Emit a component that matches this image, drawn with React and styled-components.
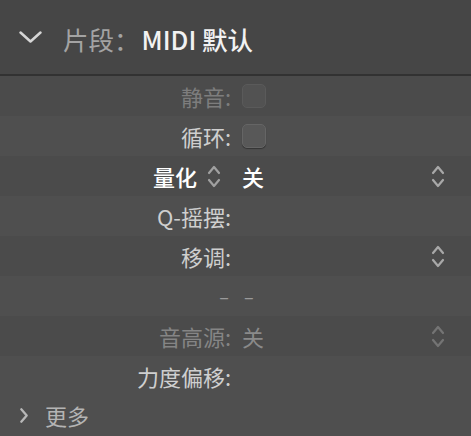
import React from 'react';
import styled, { createGlobalStyle } from 'styled-components';

const GlobalStyle = createGlobalStyle`
  html, body {
    margin: 0;
    padding: 0;
    background: #4c4c4c;
  }
  body {
    font-family: "Noto Sans CJK SC", "Noto Sans", sans-serif;
  }
`;

const Panel = styled.div`
  width: 471px;
  height: 436px;
  display: flex;
  flex-direction: column;
  background: #4c4c4c;
  overflow: hidden;
`;

const Header = styled.div`
  height: 74px;
  flex-shrink: 0;
  display: flex;
  align-items: center;
  gap: 20px;
  padding-left: 18px;
  background: #464646;
  border-bottom: 2px solid #323232;
  font-size: 25.5px;
  line-height: 1;
`;

const HeaderTitle = styled.div`
  display: flex;
  align-items: center;
  margin-top: 4px;
`;

const Dim = styled.span`
  color: #a3a3a3;
`;

const Bright = styled.span`
  color: #f2f2f2;
  font-weight: 500;
  margin-left: 2px;
`;

const Row = styled.div`
  height: 40px;
  flex-shrink: 0;
  display: grid;
  grid-template-columns: 231px 1fr 40px;
  column-gap: 11px;
  align-items: center;
  background: ${p => (p.$alt ? '#4f4f4f' : '#4b4b4b')};
  font-size: 22px;
  line-height: 1;
`;

const Label = styled.div`
  display: flex;
  align-items: center;
  justify-content: flex-end;
  gap: 10px;
  color: ${p => p.$tone};
  font-weight: ${p => (p.$bold ? 500 : 400)};
  white-space: nowrap;
`;

const Value = styled.div`
  display: flex;
  align-items: center;
  color: ${p => p.$tone};
  font-weight: ${p => (p.$bold ? 500 : 400)};
`;

const RightIcon = styled.div`
  display: flex;
  align-items: center;
  justify-content: flex-start;
`;

const InlineIcon = styled.span`
  display: flex;
  margin-right: 10px;
`;

const Checkbox = styled.div`
  width: 22px;
  height: 22px;
  border-radius: 5px;
  background: ${p => (p.$dim ? '#525252' : '#585858')};
  border: 1px solid ${p => (p.$dim ? '#5a5a5a' : '#656565')};
  box-shadow: ${p => (p.$dim ? 'none' : '0 1px 1px rgba(0,0,0,0.35)')};
`;

const Dash = styled.span`
  color: #9a9a9a;
  font-size: 18px;
  margin-right: ${p => (p.$left ? '2px' : '0')};
  margin-left: ${p => (p.$left ? '0' : '2px')};
`;

const MoreRow = styled.div`
  flex: 1;
  display: flex;
  align-items: center;
  gap: 16px;
  padding-left: 19px;
  background: #4f4f4f;
  color: #b4b4b4;
  font-size: 22px;
  line-height: 1;
  padding-bottom: 2px;
`;

const Chevron = ({ dir = 'down', color, w, h, stroke = 2.5 }) => (
  <svg width={w} height={h} viewBox={`0 0 ${w} ${h}`} fill="none">
    {dir === 'down' ? (
      <polyline
        points={`${stroke},${stroke} ${w / 2},${h - stroke} ${w - stroke},${stroke}`}
        stroke={color}
        strokeWidth={stroke}
        strokeLinecap="round"
        strokeLinejoin="round"
      />
    ) : (
      <polyline
        points={`${stroke},${stroke} ${w - stroke},${h / 2} ${stroke},${h - stroke}`}
        stroke={color}
        strokeWidth={stroke}
        strokeLinecap="round"
        strokeLinejoin="round"
      />
    )}
  </svg>
);

const UpDown = ({ color }) => (
  <svg width="14" height="25" viewBox="0 0 14 25" fill="none">
    <polyline points="2,9 7,3 12,9" stroke={color} strokeWidth="2.2" strokeLinecap="round" strokeLinejoin="round" />
    <polyline points="2,16 7,22 12,16" stroke={color} strokeWidth="2.2" strokeLinecap="round" strokeLinejoin="round" />
  </svg>
);

export default function App() {
  return (
    <>
      <GlobalStyle />
      <Panel>
        <Header>
          <Chevron dir="down" color="#d6d6d6" w={25} h={14} />
          <HeaderTitle>
            <Dim>片段：</Dim>
            <Bright>MIDI 默认</Bright>
          </HeaderTitle>
        </Header>

        <Row>
          <Label $tone="#7d7d7d">静音:</Label>
          <Value><Checkbox $dim /></Value>
          <RightIcon />
        </Row>
        <Row $alt>
          <Label $tone="#cfcfcf">循环:</Label>
          <Value><Checkbox /></Value>
          <RightIcon />
        </Row>
        <Row>
          <Label $tone="#ffffff" $bold>
            量化
            <InlineIcon><UpDown color="#a0a0a0" /></InlineIcon>
          </Label>
          <Value $tone="#ffffff" $bold>关</Value>
          <RightIcon><UpDown color="#a8a8a8" /></RightIcon>
        </Row>
        <Row $alt>
          <Label $tone="#cfcfcf">Q-摇摆:</Label>
          <Value />
          <RightIcon />
        </Row>
        <Row>
          <Label $tone="#cfcfcf">移调:</Label>
          <Value />
          <RightIcon><UpDown color="#a8a8a8" /></RightIcon>
        </Row>
        <Row $alt>
          <Label><Dash $left>–</Dash></Label>
          <Value><Dash>–</Dash></Value>
          <RightIcon />
        </Row>
        <Row>
          <Label $tone="#858585">音高源:</Label>
          <Value $tone="#8a8a8a">关</Value>
          <RightIcon><UpDown color="#747474" /></RightIcon>
        </Row>
        <Row $alt>
          <Label $tone="#cfcfcf">力度偏移:</Label>
          <Value />
          <RightIcon />
        </Row>
        <MoreRow>
          <Chevron dir="right" color="#b8b8b8" w={10} h={17} stroke={2.3} />
          更多
        </MoreRow>
      </Panel>
    </>
  );
}
